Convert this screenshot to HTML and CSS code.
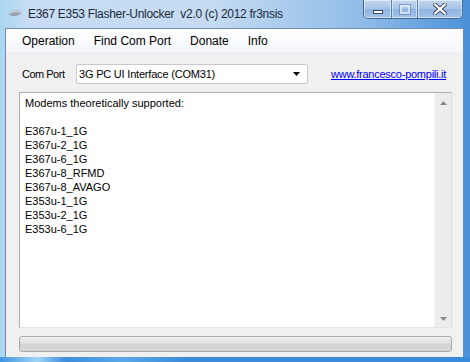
FILE: index.html
```html
<!DOCTYPE html>
<html lang="en">
<head>
    <meta charset="UTF-8">
    <title>E367 E353 Flasher-Unlocker</title>
    <link rel="stylesheet" href="styles.css">
</head>
<body>
    <div class="window">
        <div class="titlebar">
            <svg class="app-icon" width="16" height="10" viewBox="0 0 16 10">
                <path d="M1 5 C4 1, 11 0, 15 3 C13 7, 6 9, 1 5 Z" fill="#9aa3ad"/>
                <path d="M2 5 C5 2, 10 2, 14 3.5" stroke="#e6eaee" stroke-width="1" fill="none"/>
            </svg>
            <span class="title">E367 E353 Flasher-Unlocker&nbsp; v2.0 (c) 2012 fr3nsis</span>
            <div class="caption-buttons">
                <div class="cap-btn cap-min"><span class="min-bar"></span></div>
                <div class="cap-btn cap-max"><span class="max-box"></span></div>
                <div class="cap-btn cap-close">
                    <svg width="14" height="12" viewBox="0 0 14 12">
                        <path d="M2 1.5 L12 10.5 M12 1.5 L2 10.5" stroke="#3c4a5c" stroke-width="4" stroke-linecap="square"/>
                        <path d="M2 1.5 L12 10.5 M12 1.5 L2 10.5" stroke="#ffffff" stroke-width="2.2" stroke-linecap="square"/>
                    </svg>
                </div>
            </div>
        </div>

        <div class="client">
            <div class="menubar">
                <span class="menu-item">Operation</span>
                <span class="menu-item">Find Com Port</span>
                <span class="menu-item">Donate</span>
                <span class="menu-item">Info</span>
            </div>

            <div class="port-row">
                <span class="port-label">Com Port</span>
                <div class="combo">
                    <span class="combo-text">3G PC UI Interface (COM31)</span>
                    <svg class="combo-arrow" width="7" height="4" viewBox="0 0 7 4">
                        <path d="M0 0 H7 L3.5 4 Z" fill="#000"/>
                    </svg>
                </div>
                <a class="site-link" href="#">www.francesco-pompili.it</a>
            </div>

            <div class="log">
                <div class="log-text">
                    <div>Modems theoretically supported:</div>
                    <div>&nbsp;</div>
                    <div>E367u-1_1G</div>
                    <div>E367u-2_1G</div>
                    <div>E367u-6_1G</div>
                    <div>E367u-8_RFMD</div>
                    <div>E367u-8_AVAGO</div>
                    <div>E353u-1_1G</div>
                    <div>E353u-2_1G</div>
                    <div>E353u-6_1G</div>
                </div>
                <div class="scrollbar">
                    <svg width="7" height="4" viewBox="0 0 7 4"><path d="M0 4 H7 L3.5 0 Z" fill="#8a8a8a"/></svg>
                    <svg width="7" height="4" viewBox="0 0 7 4"><path d="M0 0 H7 L3.5 4 Z" fill="#8a8a8a"/></svg>
                </div>
            </div>

            <div class="progress"></div>
        </div>
    </div>
</body>
</html>
```

FILE: styles.css
```css
body {
    margin: 0;
    font-family: "Liberation Sans", Arial, sans-serif;
}
.window {
    width: 470px;
    height: 362px;
    box-sizing: border-box;
    padding: 0 6px 5px 5px;
    display: flex;
    flex-direction: column;
    background: linear-gradient(90deg, #a9d6f2 0%, #c6ddf3 6%, #c4dbf2 45%, #8fbbe8 78%, #4a91da 100%);
    position: relative;
    overflow: hidden;
}
.window::after {
    content: "";
    position: absolute;
    left: 0;
    right: 0;
    bottom: 0;
    height: 5px;
    background: linear-gradient(90deg, #3f95df 0%, #9fd4f7 8%, #3d8ddc 14%, #5aa8e8 26%, #3a8ad8 40%, #3b8bdb 100%);
}
.titlebar {
    height: 28px;
    display: flex;
    align-items: flex-start;
    flex-shrink: 0;
}
.app-icon {
    margin: 9px 0 0 2px;
}
.title {
    margin: 7px 0 0 5px;
    font-size: 12px;
    letter-spacing: -0.3px;
    color: #1e2a3a;
    white-space: nowrap;
}
.caption-buttons {
    margin-left: auto;
    margin-right: 1px;
    display: flex;
    border: 1px solid #46688f;
    border-top: none;
    border-radius: 0 0 5px 5px;
    overflow: hidden;
}
.cap-btn {
    height: 18px;
    box-sizing: border-box;
    background: linear-gradient(#c2d8f0, #a6c3e6 50%, #8fb3df 51%, #a3c5ec);
    box-shadow: inset 0 0 0 1px rgba(255, 255, 255, 0.5);
    display: flex;
    align-items: center;
    justify-content: center;
}
.cap-min {
    width: 28px;
    border-right: 1px solid #5a7ea8;
}
.cap-max {
    width: 26px;
    border-right: 1px solid #5a7ea8;
}
.cap-close {
    width: 44px;
}
.min-bar {
    width: 8px;
    height: 2px;
    margin-top: 6px;
    background: #ffffff;
    border: 1px solid #3c4a5c;
}
.max-box {
    width: 6px;
    height: 5px;
    border: 2px solid rgba(255, 255, 255, 0.55);
    outline: 1px solid rgba(80, 110, 150, 0.5);
}
.client {
    flex: 1;
    display: flex;
    flex-direction: column;
    background: #f0f0f0;
    border: 1px solid #6d8bb0;
    border-bottom: none;
}
.menubar {
    height: 23px;
    display: flex;
    align-items: center;
    gap: 19px;
    padding-left: 16px;
    font-size: 12px;
    color: #000;
    background: linear-gradient(#ffffff, #f3f6fa);
}
.port-row {
    margin-top: 12px;
    height: 20px;
    display: flex;
    align-items: center;
    padding-left: 16px;
    font-size: 11px;
}
.port-label {
    width: 54px;
    letter-spacing: -0.5px;
}
.combo {
    width: 232px;
    height: 20px;
    box-sizing: border-box;
    border: 1px solid #c9c9c9;
    border-radius: 2px;
    background: #fff;
    display: flex;
    align-items: center;
    padding: 0 4px 0 2px;
}
.combo-text {
    letter-spacing: -0.2px;
}
.combo-arrow {
    margin-left: auto;
    margin-right: 3px;
}
.site-link {
    margin-left: 23px;
    color: #0000ff;
    letter-spacing: -0.25px;
}
.log {
    margin: 8px 11px 0 13px;
    height: 236px;
    box-sizing: border-box;
    border: 1px solid #adadad;
    border-right-color: #dcdcdc;
    border-bottom-color: #e3e3e3;
    background: #fff;
    display: flex;
}
.log-text {
    flex: 1;
    padding: 3px 0 0 5px;
    font-size: 11px;
    line-height: 14px;
    color: #000;
}
.scrollbar {
    width: 17px;
    background: #ececec;
    border-left: 1px solid #f6f6f6;
    display: flex;
    flex-direction: column;
    align-items: center;
    justify-content: space-between;
    padding: 8px 0 6px;
    box-sizing: border-box;
}
.progress {
    margin: 8px 11px 0 13px;
    height: 16px;
    box-sizing: border-box;
    border: 1px solid #a8a8a8;
    border-radius: 3px;
    background: linear-gradient(#eaeaea, #e2e2e2 45%, #d3d3d3 50%, #d8d8d8);
    box-shadow: inset 0 1px 0 #f7f7f7;
}
```
